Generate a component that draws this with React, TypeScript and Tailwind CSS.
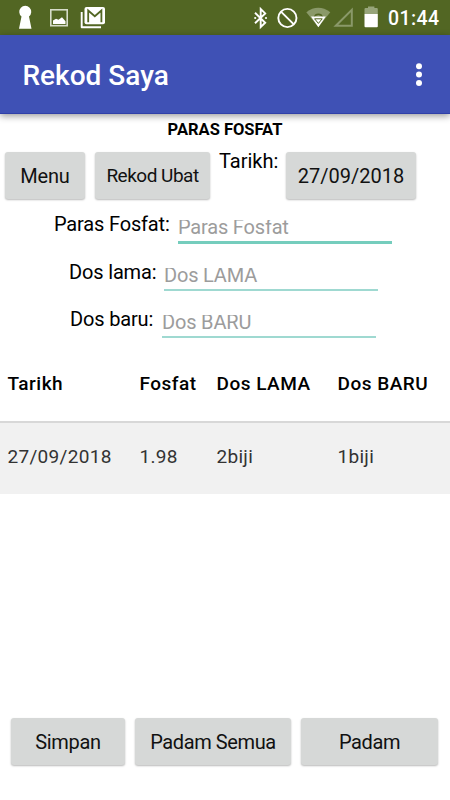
import React from 'react';
import clsx from 'clsx';

const fields = [
  { label: 'Paras Fosfat:', hint: 'Paras Fosfat', row: 'pl-[54px]', labelWidth: 'w-[124px]', active: true },
  { label: 'Dos lama:', hint: 'Dos LAMA', row: 'pl-[69px]', labelWidth: 'w-[95px]', active: false },
  { label: 'Dos baru:', hint: 'Dos BARU', row: 'pl-[70px]', labelWidth: 'w-[92px]', active: false },
];

const columns = ['Tarikh', 'Fosfat', 'Dos LAMA', 'Dos BARU'];
const records = [['27/09/2018', '1.98', '2biji', '1biji']];

const StatusBar = () => (
  <div className="h-[35px] shrink-0 bg-[#526623] text-white">
    <svg width="450" height="35" viewBox="0 0 450 35" fill="none">
      {/* keyhole */}
      <path d="M21.5 16.5a6 6 0 1 1 7.5 0l2.5 12.3H19Z" fill="white" />
      {/* picture */}
      <rect x="50.8" y="9.8" width="16.4" height="15.9" stroke="#d6dcc9" strokeWidth="1.6" />
      <path d="M53 24v-3.5l3-1.8 2.5 1 3.5-2.5 3.5 4V24Z" fill="white" />
      {/* mail */}
      <path d="M81.7 12v15.3H101" stroke="white" strokeWidth="1.9" strokeLinejoin="round" />
      <rect x="84.5" y="7" width="20.5" height="17.3" rx="2" fill="white" />
      <path d="M88.2 22.2V10.5l6.6 5.7 6.6-5.7v11.7" stroke="#526623" strokeWidth="1.8" />
      {/* bluetooth */}
      <path d="m255 12.7 10.2 10-4.5 4.3V9l4.5 4.4L255 23.3" stroke="white" strokeWidth="1.9" />
      <circle cx="255.2" cy="18" r="1.1" fill="white" />
      <circle cx="266" cy="18" r="1.1" fill="white" />
      {/* do not disturb */}
      <circle cx="287.4" cy="18" r="9.1" stroke="white" strokeWidth="1.9" />
      <path d="m281.2 11.8 12.4 12.4" stroke="white" strokeWidth="1.9" />
      {/* wifi */}
      <path d="M306.3 12.3Q318.2 3.4 330.3 12.3L318.3 27Z" fill="#8a9969" />
      <path d="M311 16.5h14.8l-7.4 10.7Z" fill="white" />
      <path d="M314.2 16.5q.2-3 4.2-3t4.2 3l-4.2-1.6Z" fill="#526623" />
      <path d="M314.6 18.8h7.6l-3.8 4.6Z" stroke="#526623" strokeWidth="1" />
      {/* signal */}
      <path d="M335.8 25.8 351.8 9.8v16Z" stroke="#8a9969" strokeWidth="2" />
      {/* battery */}
      <path d="M364.5 14V9q0-1 1-1h2.5V6.5h6.4V8h2.4q1 0 1 1v5Z" fill="#97a57a" />
      <path d="M364.5 14h13.3v12.2q0 1-1 1h-11.3q-1 0-1-1Z" fill="white" />
      <text x="388" y="25.2" fill="white" fontSize="19.5" fontWeight="500" textLength="51">01:44</text>
    </svg>
  </div>
);

const Button = ({ className, children }: { className?: string; children: React.ReactNode }) => (
  <button
    className={clsx(
      'flex h-[47px] shrink-0 items-center justify-center rounded-[3px] bg-[#d6d8d7] text-[#111] shadow-[0_1px_2px_rgba(0,0,0,0.28)]',
      className,
    )}
  >
    {children}
  </button>
);

const App = () => {
  return (
    <div className="flex h-[800px] w-[450px] flex-col overflow-hidden bg-white font-[Roboto,sans-serif] text-black">
      <StatusBar />
      <header className="flex h-[79px] shrink-0 items-center justify-between border-b border-[#3040a8] bg-[#3f51b5] pr-[27px] pl-[22.5px] text-white shadow-[0_2px_7px_rgba(0,0,0,0.4)]">
        <h1 className="pt-[3px] text-[28px] leading-8 font-medium">Rekod Saya</h1>
        <svg width="8" height="26" viewBox="0 0 8 26" fill="white">
          <circle cx="4" cy="5.3" r="3" />
          <circle cx="4" cy="13.6" r="3" />
          <circle cx="4" cy="21.9" r="3" />
        </svg>
      </header>

      <h2 className="mt-[6px] text-center text-[16.5px] leading-5 font-bold">PARAS FOSFAT</h2>

      <div className="mt-[12px] flex h-[47px] shrink-0 pl-[5px]">
        <Button className="w-[80px] text-[20px] tracking-[-0.2px]">Menu</Button>
        <Button className="ml-[10px] w-[115px] pt-px text-[19px] tracking-[-0.5px]">Rekod Ubat</Button>
        <span className="ml-[9px] w-[67px] shrink-0 text-[20px] leading-[19px]">Tarikh:</span>
        <Button className="w-[130px] text-[20px]">27/09/2018</Button>
      </div>

      <div className="mt-[13px] shrink-0">
        {fields.map((field) => (
          <div key={field.label} className={clsx('flex h-[47.6px]', field.row)}>
            <label className={clsx('shrink-0 text-[20px] leading-[24px] tracking-[-0.16px]', field.labelWidth)}>
              {field.label}
            </label>
            <div className="w-[214px] pt-[8px]">
              <div
                className={clsx(
                  'overflow-hidden text-[20px] leading-[14px] tracking-[-0.18px] text-[#9c9c9c]',
                  field.active ? 'h-[24px] border-b-[3px] border-[#75cdbd]' : 'h-[23px] border-b-2 border-[#9fd9d1]',
                )}
              >
                {field.hint}
              </div>
            </div>
          </div>
        ))}
      </div>

      <table className="mt-[-8px] w-full shrink-0 table-fixed border-collapse text-left">
        <colgroup>
          <col className="w-[132px]" />
          <col className="w-[77px]" />
          <col className="w-[121px]" />
          <col className="w-[120px]" />
        </colgroup>
        <thead>
          <tr className="h-[75px]">
            {columns.map((column) => (
              <th key={column} className="p-0 pl-[7.5px] text-[19px] font-medium tracking-[0.5px]">
                {column}
              </th>
            ))}
          </tr>
        </thead>
        <tbody>
          {records.map((record) => (
            <tr key={record[0]} className="h-[72px] border-t-2 border-[#d8d8d8] bg-[#f1f1f1]">
              {record.map((cell) => (
                <td key={cell} className="p-0 pb-[3px] pl-[7.5px] text-[19px] tracking-[0.3px] text-[#333]">
                  {cell}
                </td>
              ))}
            </tr>
          ))}
        </tbody>
      </table>

      <div className="mt-auto mb-[35px] flex shrink-0 gap-[10px] pl-[11px]">
        <Button className="w-[114px] text-[20px] tracking-[-0.3px]">Simpan</Button>
        <Button className="w-[156px] text-[20px] tracking-[-0.4px]">Padam Semua</Button>
        <Button className="w-[137px] text-[20px] tracking-[-0.4px]">Padam</Button>
      </div>
    </div>
  );
};

export default App;
